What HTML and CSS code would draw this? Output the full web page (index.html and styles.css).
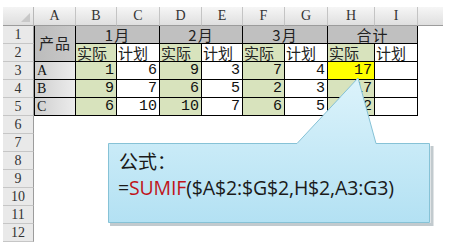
FILE: index.html
```html
<!DOCTYPE html>
<html>
<head>
<meta charset="utf-8">
<link rel="stylesheet" href="styles.css">
</head>
<body>
<div class="page">
  <div class="sheet">
    <div class="corner"><span class="tri"></span></div>
    <div class="ch">A</div><div class="ch">B</div><div class="ch">C</div><div class="ch">D</div><div class="ch">E</div><div class="ch">F</div><div class="ch">G</div><div class="ch">H</div><div class="ch">I</div><div class="ch last"></div>

    <div class="rh">1</div>
    <div class="c hd prod">产品</div>
    <div class="c hd span2">1月</div>
    <div class="c hd span2">2月</div>
    <div class="c hd span2">3月</div>
    <div class="c hd span2">合计</div>
    <div class="blank"></div>

    <div class="rh">2</div>
    <div class="c g zh">实际</div><div class="c zh">计划</div>
    <div class="c g zh">实际</div><div class="c zh">计划</div>
    <div class="c g zh">实际</div><div class="c zh">计划</div>
    <div class="c g zh">实际</div><div class="c zh">计划</div>
    <div class="blank"></div>

    <div class="rh">3</div>
    <div class="c name">A</div>
    <div class="c g n">1</div><div class="c n">6</div>
    <div class="c g n">9</div><div class="c n">3</div>
    <div class="c g n">7</div><div class="c n">4</div>
    <div class="c y n">17</div><div class="c n"></div>
    <div class="blank"></div>

    <div class="rh">4</div>
    <div class="c name">B</div>
    <div class="c g n">9</div><div class="c n">7</div>
    <div class="c g n">6</div><div class="c n">5</div>
    <div class="c g n">2</div><div class="c n">3</div>
    <div class="c g n">17</div><div class="c n"></div>
    <div class="blank"></div>

    <div class="rh">5</div>
    <div class="c name">C</div>
    <div class="c g n">6</div><div class="c n">10</div>
    <div class="c g n">10</div><div class="c n">7</div>
    <div class="c g n">6</div><div class="c n">5</div>
    <div class="c g n">22</div><div class="c n"></div>
    <div class="blank"></div>

    <div class="rh">6</div><div class="rest"></div>
    <div class="rh">7</div><div class="rest"></div>
    <div class="rh">8</div><div class="rest"></div>
    <div class="rh">9</div><div class="rest"></div>
    <div class="rh">10</div><div class="rest"></div>
    <div class="rh">11</div><div class="rest"></div>
    <div class="rh">12</div><div class="rest"></div>
  </div>

  <div class="callout">
    <svg class="bubble" width="456" height="244" viewBox="0 0 456 244">
      <defs>
        <linearGradient id="bg" x1="0" y1="0" x2="0" y2="1">
          <stop offset="0" stop-color="#dcf3fb"/>
          <stop offset="1" stop-color="#b3e1f3"/>
        </linearGradient>
      </defs>
      <path d="M110,224.5 L432,224.5 L432,146" fill="none" stroke="#9aa7ad" stroke-width="3" opacity="0.6"/>
      <path d="M108.5,143.5 L297,143.5 L358,78 L376,143.5 L429.5,143.5 L429.5,222.5 L108.5,222.5 Z" fill="url(#bg)" stroke="#86c2d6" stroke-width="1"/>
    </svg>
    <div class="ctext">
      <div class="l1">公式：</div>
      <div class="l2">=<span class="fn">SUMIF</span>($A$2:$G$2,H$2,A3:G3)</div>
    </div>
  </div>
</div>
</body>
</html>
```
FILE: styles.css
```css
html, body {
  margin: 0;
  padding: 0;
  background: #ffffff;
}
.page {
  position: relative;
  width: 456px;
  height: 244px;
  overflow: hidden;
  padding: 7px 0 0 3px;
  box-sizing: border-box;
}
.sheet {
  display: grid;
  grid-template-columns: 31px 42px 41px 43px 42px 41px 42px 43px 47px 43px 25px;
  grid-template-rows: 19px repeat(12, 18px);
  font-family: "Liberation Mono", "Noto Sans CJK SC", monospace;
  color: #111;
}
.corner {
  background: linear-gradient(#f4f4f4, #dedede);
  border-right: 1px solid #b8b8b8;
  border-bottom: 1px solid #9c9c9c;
  box-sizing: border-box;
  position: relative;
}
.tri {
  position: absolute;
  right: 3px;
  bottom: 3px;
  width: 0;
  height: 0;
  border-left: 9px solid transparent;
  border-bottom: 9px solid #c8c8c8;
}
.ch {
  background: linear-gradient(#f6f6f6, #dfdfdf);
  border-right: 1px solid #c4c4c4;
  border-bottom: 1px solid #9c9c9c;
  box-sizing: border-box;
  display: flex;
  align-items: center;
  justify-content: center;
  font-family: "Liberation Serif", serif;
  font-size: 14px;
  color: #333;
}
.ch.last {
  border-right: none;
}
.rh {
  grid-column: 1;
  background: #e9e9e9;
  border-right: 1px solid #9c9c9c;
  border-bottom: 1px solid #c6c6c6;
  box-sizing: border-box;
  display: flex;
  align-items: center;
  justify-content: center;
  font-family: "Liberation Serif", serif;
  font-size: 14px;
  color: #333;
}
.c {
  border-right: 1px solid #000;
  border-bottom: 1px solid #000;
  box-sizing: border-box;
  background: #ffffff;
  font-size: 14px;
  line-height: 17px;
  white-space: nowrap;
}
.hd {
  background: #c0c0c0;
  display: flex;
  align-items: center;
  justify-content: center;
  font-family: "Noto Sans CJK SC", sans-serif;
  font-size: 15px;
  line-height: 16px;
  letter-spacing: 1px;
  color: #222;
}
.hd.span2 {
  grid-column: span 2;
}
.prod {
  grid-row: span 2;
  background: linear-gradient(90deg, #bcbcbc, #c8c8c8);
  border-left: 1px solid #000;
  padding-bottom: 2px;
}
.zh {
  font-family: "Noto Sans CJK SC", sans-serif;
  font-size: 15px;
  line-height: 16px;
  padding-left: 1px;
  display: flex;
  align-items: center;
  color: #222;
}
.g {
  background: #d8e3bd;
}
.y {
  background: #ffff00;
}
.n {
  text-align: right;
  padding-right: 2px;
  font-size: 15px;
  line-height: 18px;
}
.name {
  background: linear-gradient(90deg, #cfcfcf, #ececec);
  border-left: 1px solid #000;
  padding-left: 2px;
  font-family: "Liberation Serif", serif;
  font-size: 14px;
  line-height: 18px;
}
.blank {
  grid-column: 11;
}
.rest {
  grid-column: 2 / span 10;
}
.callout {
  position: absolute;
  left: 0;
  top: 0;
  width: 456px;
  height: 244px;
}
.bubble {
  position: absolute;
  left: 0;
  top: 0;
}
.ctext {
  position: absolute;
  left: 119px;
  top: 148px;
  color: #1a1a1a;
}
.l1 {
  font-family: "Noto Sans CJK SC", sans-serif;
  font-size: 19px;
  line-height: 25px;
}
.l2 {
  font-family: "Open Sans", "Liberation Sans", sans-serif;
  font-size: 19.5px;
  line-height: 30px;
  letter-spacing: -0.15px;
  margin-left: -1px;
}
.fn {
  color: #c0141b;
}
```
